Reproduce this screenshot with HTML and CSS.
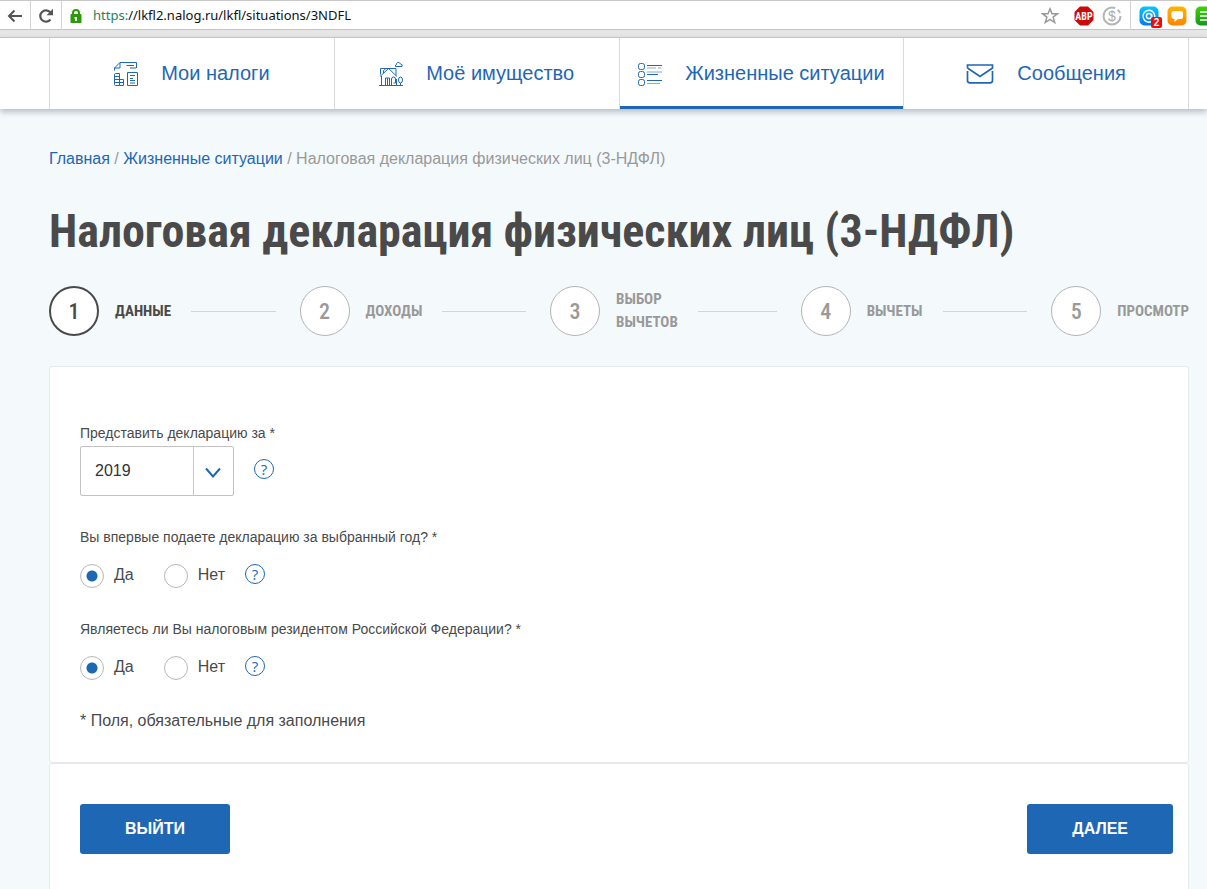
FILE: index.html
```html
<!DOCTYPE html>
<html lang="ru">
<head>
<meta charset="utf-8">
<meta name="viewport" content="width=device-width, initial-scale=1">
<title>Налоговая декларация физических лиц (3-НДФЛ)</title>
<link rel="stylesheet" href="styles.css">
</head>
<body>
<div class="toolbar">
  <button class="tool tool-back" type="button" aria-label="Назад">
    <svg width="16" height="16" viewBox="0 0 16 16" fill="none" stroke="#555" stroke-width="2"><path d="M15 8H2M7.500 2.500L2 8l5.500 5.500"/></svg>
  </button>
  <button class="tool" type="button" aria-label="Обновить">
    <svg width="16" height="16" viewBox="0 0 16 16"><path d="M12.500 11.500A5.700 5.700 0 1 1 12.300 4.300" fill="none" stroke="#555" stroke-width="2.200"/><path d="M15 .8v6.400H8.600z" fill="#555"/></svg>
  </button>
  <div class="address">
    <svg width="12" height="14" viewBox="0 0 12 14"><path d="M3 6V4a3 3 0 0 1 6 0v2" fill="none" stroke="#2a9a08" stroke-width="2"/><rect x=".5" y="5" width="11" height="9" rx="1" fill="#2a9a08"/><path d="M4.500 8H7v4H5V9.500h-.5z" fill="#fff"/></svg>
    <div class="url"><span class="scheme">https:</span>//lkfl2.nalog.ru/lkfl/situations/3NDFL</div>
  </div>
  <div class="extensions">
    <button class="ext" type="button" aria-label="В закладки">
      <svg width="18" height="18" viewBox="0 0 18 18" fill="none" stroke="#999" stroke-width="1.500"><path d="M9 1.800l2 5h5.400l-4.300 3.300 1.600 5.400L9 12.300l-4.700 3.200 1.600-5.400L1.600 6.800H7z"/></svg>
    </button>
    <button class="ext ext-abp" type="button" aria-label="Adblock Plus">
      <svg width="20" height="20" viewBox="0 0 20 20"><path d="M6 0.500h8L19.500 6v8L14 19.500H6L.5 14V6z" fill="#cc0a0a"/><text x="10" y="13.500" text-anchor="middle" class="abp-text">ABP</text></svg>
    </button>
    <button class="ext ext-cash" type="button" aria-label="Кэшбэк">
      <svg width="20" height="20" viewBox="0 0 20 20"><circle cx="10" cy="10" r="8.500" fill="none" stroke="#b4b4b4" stroke-width="2" stroke-dasharray="43 3 4 3"/><text x="10" y="15" text-anchor="middle" class="cash-text">$</text></svg>
    </button>
    <div class="pinned">
      <button class="ext" type="button" aria-label="Почта, 2 новых">
        <svg width="20" height="20" viewBox="0 0 20 20"><defs><linearGradient id="gb" x2="0" y2="1"><stop stop-color="#00c8ff"/><stop offset="1" stop-color="#0878ee"/></linearGradient></defs><rect x=".5" y=".5" width="19" height="19" rx="5" fill="url(#gb)"/><g fill="none" stroke="#fff" stroke-width="1.500"><circle cx="10" cy="10" r="2.600"/><path d="M12.600 8v3c0 2.500 3.200 1.800 3.200-1A5.900 5.900 0 1 0 12.500 15.500"/></g></svg>
        <span class="badge">2</span>
      </button>
      <button class="ext" type="button" aria-label="Сообщения">
        <svg width="20" height="20" viewBox="0 0 20 20"><defs><linearGradient id="go" x2="0" y2="1"><stop stop-color="#ffb400"/><stop offset="1" stop-color="#ff8500"/></linearGradient></defs><rect x=".5" y=".5" width="19" height="19" rx="5" fill="url(#go)"/><path d="M7 5h7q2 0 2 2v4q0 2-2 2h-3l-3.500 3V13H6.500q-2-.5-2-2V7Q4.500 5 7 5z" fill="#fff"/></svg>
      </button>
      <button class="ext" type="button" aria-label="Меню">
        <svg width="20" height="20" viewBox="0 0 20 20"><defs><linearGradient id="gg" x2="0" y2="1"><stop stop-color="#3fd400"/><stop offset="1" stop-color="#14981c"/></linearGradient></defs><rect x=".5" y=".5" width="19" height="19" rx="5" fill="url(#gg)"/><path d="M5 6h10M5 10h10M5 14h10" stroke="#fff" stroke-width="1.600"/></svg>
      </button>
    </div>
  </div>
</div>

<nav class="nav">
  <ul class="nav-list">
    <li><a class="nav-link" href="#">
      <svg width="24" height="26" viewBox="0 0 24 26" fill="none" stroke="#1e67b4"><path d="M.5 9.500V7L6 1.500h16.500v5.500M.5 7H6V1.500M12.500 4.500H20M16 7h6M1.500 12.500h4v12h-4a1 1 0 0 1-1-1v-10a1 1 0 0 1 1-1zM.5 15.500h5M.5 18.500h9v6h-4M.5 21.500h9M13.500 11.500h10v13h-10zM16 14.500h5M16 17.500h3M16 19.500h5M16 22h5"/></svg>
      <span>Мои налоги</span></a></li>
    <li><a class="nav-link" href="#">
      <svg width="24" height="26" viewBox="0 0 24 26" fill="none" stroke="#1e67b4"><path d="M0 24.500h24M2.500 24V15M1 15.500l8.500-8 8.500 8M1.500 13.500v-6h15.500v6.500M4.500 12V9.500L6.500 8M6.500 24v-7h4v7M8.500 17v7M12.500 24v-6a2 2 0 0 1 4 0v4h-2M17.500 24V18M21.500 24.500V22M16.500 5.500h6.500q1-2-1.500-2.500-1-2-3-1.500-1 .5-1 2-1.500 0-1 2z"/><ellipse cx="21.500" cy="19" rx="2" ry="3"/></svg>
      <span>Моё имущество</span></a></li>
    <li><a class="nav-link nav-current" href="#" aria-current="page">
      <svg width="24" height="24" viewBox="0 0 24 24" fill="none" stroke="#1e67b4"><rect x=".5" y="1.500" width="6" height="6" rx="2"/><rect x=".5" y="9.500" width="6" height="6" rx="2"/><rect x=".5" y="17.500" width="6" height="6" rx="2"/><path d="M9 3.500h15M9 12.500h11M9 18.500h15"/><path d="M9 6h9M20 6h3M9 10h15M9 21.500h13" opacity=".55"/></svg>
      <span>Жизненные ситуации</span></a></li>
    <li><a class="nav-link" href="#">
      <svg width="28" height="20" viewBox="0 0 28 20" fill="none" stroke="#1e67b4" stroke-width="1.700"><path d="M1.500 7v9.500q0 2.300 2.300 2.300h20.400q2.300 0 2.300-2.300V7M1.500 4V1h25v3L14 12.500 1.500 4"/></svg>
      <span>Сообщения</span></a></li>
  </ul>
</nav>

<main class="page">
  <nav class="crumbs"><a href="#">Главная</a> / <a href="#">Жизненные ситуации</a> / <span>Налоговая декларация физических лиц (3-НДФЛ)</span></nav>
  <h1 class="title">Налоговая декларация физических лиц (3-НДФЛ)</h1>

  <ol class="steps">
    <li class="step step-active"><span class="step-num">1</span><span class="step-name">Данные</span></li>
    <li class="step"><span class="step-num">2</span><span class="step-name">Доходы</span></li>
    <li class="step"><span class="step-num">3</span><span class="step-name">Выбор<br>вычетов</span></li>
    <li class="step"><span class="step-num">4</span><span class="step-name">Вычеты</span></li>
    <li class="step"><span class="step-num">5</span><span class="step-name">Просмотр</span></li>
  </ol>

  <form class="form">
    <section class="card fields">
      <div class="field">
        <label class="caption caption-select" for="year">Представить декларацию за *</label>
        <div class="row row-select">
          <div class="select">
            <select id="year"><option>2019</option><option>2018</option><option>2017</option></select>
            <svg class="select-arrow" width="16" height="12" viewBox="0 0 16 12" fill="none" stroke="#1e67b4" stroke-width="2"><path d="M1 1.500l7 8 7-8"/></svg>
          </div>
          <button class="help" type="button" aria-label="Справка">?</button>
        </div>
      </div>
      <fieldset class="field">
        <legend class="caption">Вы впервые подаете декларацию за выбранный год? *</legend>
        <div class="row row-radio">
          <label class="radio"><input type="radio" name="first" checked><span>Да</span></label>
          <label class="radio"><input type="radio" name="first"><span>Нет</span></label>
          <button class="help" type="button" aria-label="Справка">?</button>
        </div>
      </fieldset>
      <fieldset class="field">
        <legend class="caption">Являетесь ли Вы налоговым резидентом Российской Федерации? *</legend>
        <div class="row row-radio">
          <label class="radio"><input type="radio" name="resident" checked><span>Да</span></label>
          <label class="radio"><input type="radio" name="resident"><span>Нет</span></label>
          <button class="help" type="button" aria-label="Справка">?</button>
        </div>
      </fieldset>
      <p class="note">* Поля, обязательные для заполнения</p>
    </section>
    <section class="card actions">
      <button class="btn" type="button">ВЫЙТИ</button>
      <button class="btn" type="submit">ДАЛЕЕ</button>
    </section>
  </form>
</main>
</body>
</html>
```
FILE: styles.css
```css
* { box-sizing: border-box; }

body {
  margin: 0;
  min-height: 100vh;
  background: #f4f9fc;
  color: #4a4a4a;
  font: 16px/20px "Liberation Sans", Arial, sans-serif;
  overflow-x: hidden;
}

button { font: inherit; cursor: pointer; }

/* Browser toolbar */
.toolbar {
  display: flex;
  height: 37px;
  border-top: 1px solid #c8c8c8;
  border-bottom: 7px solid #e6e6e6;
  background: #fff;
  box-shadow: inset 0 -1px #c4c4c4;
}
.tool {
  display: flex;
  align-items: center;
  justify-content: center;
  width: 31px;
  padding: 0;
  border: 0;
  border-right: 1px solid #d2d2d2;
  background: none;
}
.address {
  display: flex;
  flex: 1;
  align-items: center;
  gap: 11px;
  padding-left: 8px;
}
.url {
  color: #111;
  font: 13px/18px "Noto Sans", "Open Sans", sans-serif;
  padding-bottom: 2px;
}
.scheme { color: #20805c; }
.extensions { display: flex; margin-right: -8px; }
.ext {
  display: flex;
  position: relative;
  align-items: center;
  padding: 0;
  border: 0;
  background: none;
}
.ext-abp { margin-left: 15px; }
.ext-cash { margin: 0 8px; }
.abp-text { fill: #fff; font: bold 10px "Roboto Condensed", "Liberation Sans Narrow", sans-serif; }
.cash-text { fill: #aaa; font: 14px "Liberation Sans", Arial, sans-serif; }
.pinned {
  display: flex;
  gap: 8px;
  padding-left: 8px;
  border-left: 1px solid #d2d2d2;
}
.badge {
  position: absolute;
  right: -3px;
  bottom: 2px;
  width: 11px;
  border-radius: 2px;
  background: #f00a0a;
  color: #fff;
  font: bold 10px/11px "Liberation Sans", Arial, sans-serif;
}

/* Main navigation */
.nav {
  padding: 0 18px 0 49px;
  border-top: 1px solid #c4c4c4;
  background: #fff;
  box-shadow: 0 3px 6px rgba(60, 80, 90, .35);
}
.nav-list {
  display: grid;
  grid-template-columns: repeat(4, 1fr);
  margin: 0;
  padding: 0;
  list-style: none;
  border-right: 1px solid #d8dadb;
}
.nav-list li { border-left: 1px solid #d8dadb; }
.nav-link {
  display: flex;
  align-items: center;
  justify-content: center;
  gap: 23px;
  height: 71px;
  padding-top: 3px;
  border-bottom: 3px solid transparent;
  color: #1e67b4;
  font-size: 20px;
  line-height: 24px;
  text-decoration: none;
}
.nav-link span { padding-bottom: 2px; }
.nav-current { border-bottom-color: #1e67b4; }

/* Page */
.page { padding: 40px 18px 0 49px; }
.crumbs { color: #999; }
.crumbs a { color: #1e67b4; text-decoration: none; }
.title {
  margin: 32px 0 25px;
  color: #4a4a4a;
  font: bold 46px/60px "Roboto Condensed", "Liberation Sans Narrow", sans-serif;
}

.steps {
  display: flex;
  margin: 0 0 30px;
  padding: 0;
  list-style: none;
  color: #999;
  font: bold 15px/23px "Roboto Condensed", "Liberation Sans Narrow", sans-serif;
  text-transform: uppercase;
}
.step {
  display: flex;
  flex: 1;
  align-items: center;
}
.step:last-child { flex: none; }
.step:not(:last-child)::after {
  content: "";
  flex: 1;
  height: 1px;
  margin: 0 24px 0 20px;
  background: #d2d4d5;
}
.step-num {
  display: flex;
  align-items: center;
  justify-content: center;
  width: 50px;
  height: 50px;
  margin: 0 16px 0 0;
  border: 1px solid #b4b4b4;
  border-radius: 50%;
  background: #fff;
  font-size: 22px;
  font-weight: 500;
}
.step-active { color: #4a4a4a; }
.step-active .step-num { border: 2px solid #4a4a4a; }

/* Form */
.card {
  border: 1px solid #e8e9ea;
  border-radius: 3px;
  background: #fff;
}
.fields { padding: 56px 30px 31px; }
.field {
  margin: 0 0 31px;
  padding: 0;
  border: 0;
}
.caption {
  display: block;
  padding: 0;
  font-size: 14px;
  line-height: 20px;
}
.caption-select { padding-bottom: 3px; }
.row { display: flex; align-items: center; }
.row-select { gap: 20px; }
.row-radio { padding-top: 17px; }
.select {
  display: grid;
  grid-template-columns: 1fr 40px;
  align-items: center;
  width: 154px;
  height: 50px;
  border: 1px solid #c2c2c2;
  border-radius: 2px;
}
.select select {
  grid-area: 1 / 1 / 2 / 3;
  width: 100%;
  height: 48px;
  padding: 0 14px;
  border: 0;
  appearance: none;
  background: linear-gradient(#c8c8c8, #c8c8c8) right 39px top / 1px 100% no-repeat;
  color: #333;
  font: inherit;
}
.select-arrow {
  grid-area: 1 / 2;
  justify-self: center;
  margin-top: 4px;
  pointer-events: none;
}
.help {
  width: 20px;
  height: 20px;
  margin-bottom: 4px;
  padding: 0;
  border: 1px solid #1e67b4;
  border-radius: 50%;
  background: none;
  color: #1e67b4;
  font-family: "Open Sans", sans-serif;
  font-size: 15px;
  line-height: 18px;
}
.radio {
  display: flex;
  align-items: center;
  margin-right: 30px;
}
.radio + .radio { margin-right: 20px; }
.radio input {
  width: 24px;
  height: 24px;
  margin: 0 10px 0 0;
  border: 1px solid #b8b8b8;
  border-radius: 50%;
  appearance: none;
}
.radio span { padding-bottom: 2px; }
.radio input:checked { background: radial-gradient(circle, #1e67b4 5px, transparent 6px); }
.note { margin: 0; }
.actions {
  display: flex;
  justify-content: space-between;
  padding: 40px 15px 40px 30px;
}
.btn {
  height: 50px;
  padding: 0 45px;
  border: 0;
  border-radius: 3px;
  background: #1e67b4;
  color: #fff;
  font-weight: bold;
}
```
